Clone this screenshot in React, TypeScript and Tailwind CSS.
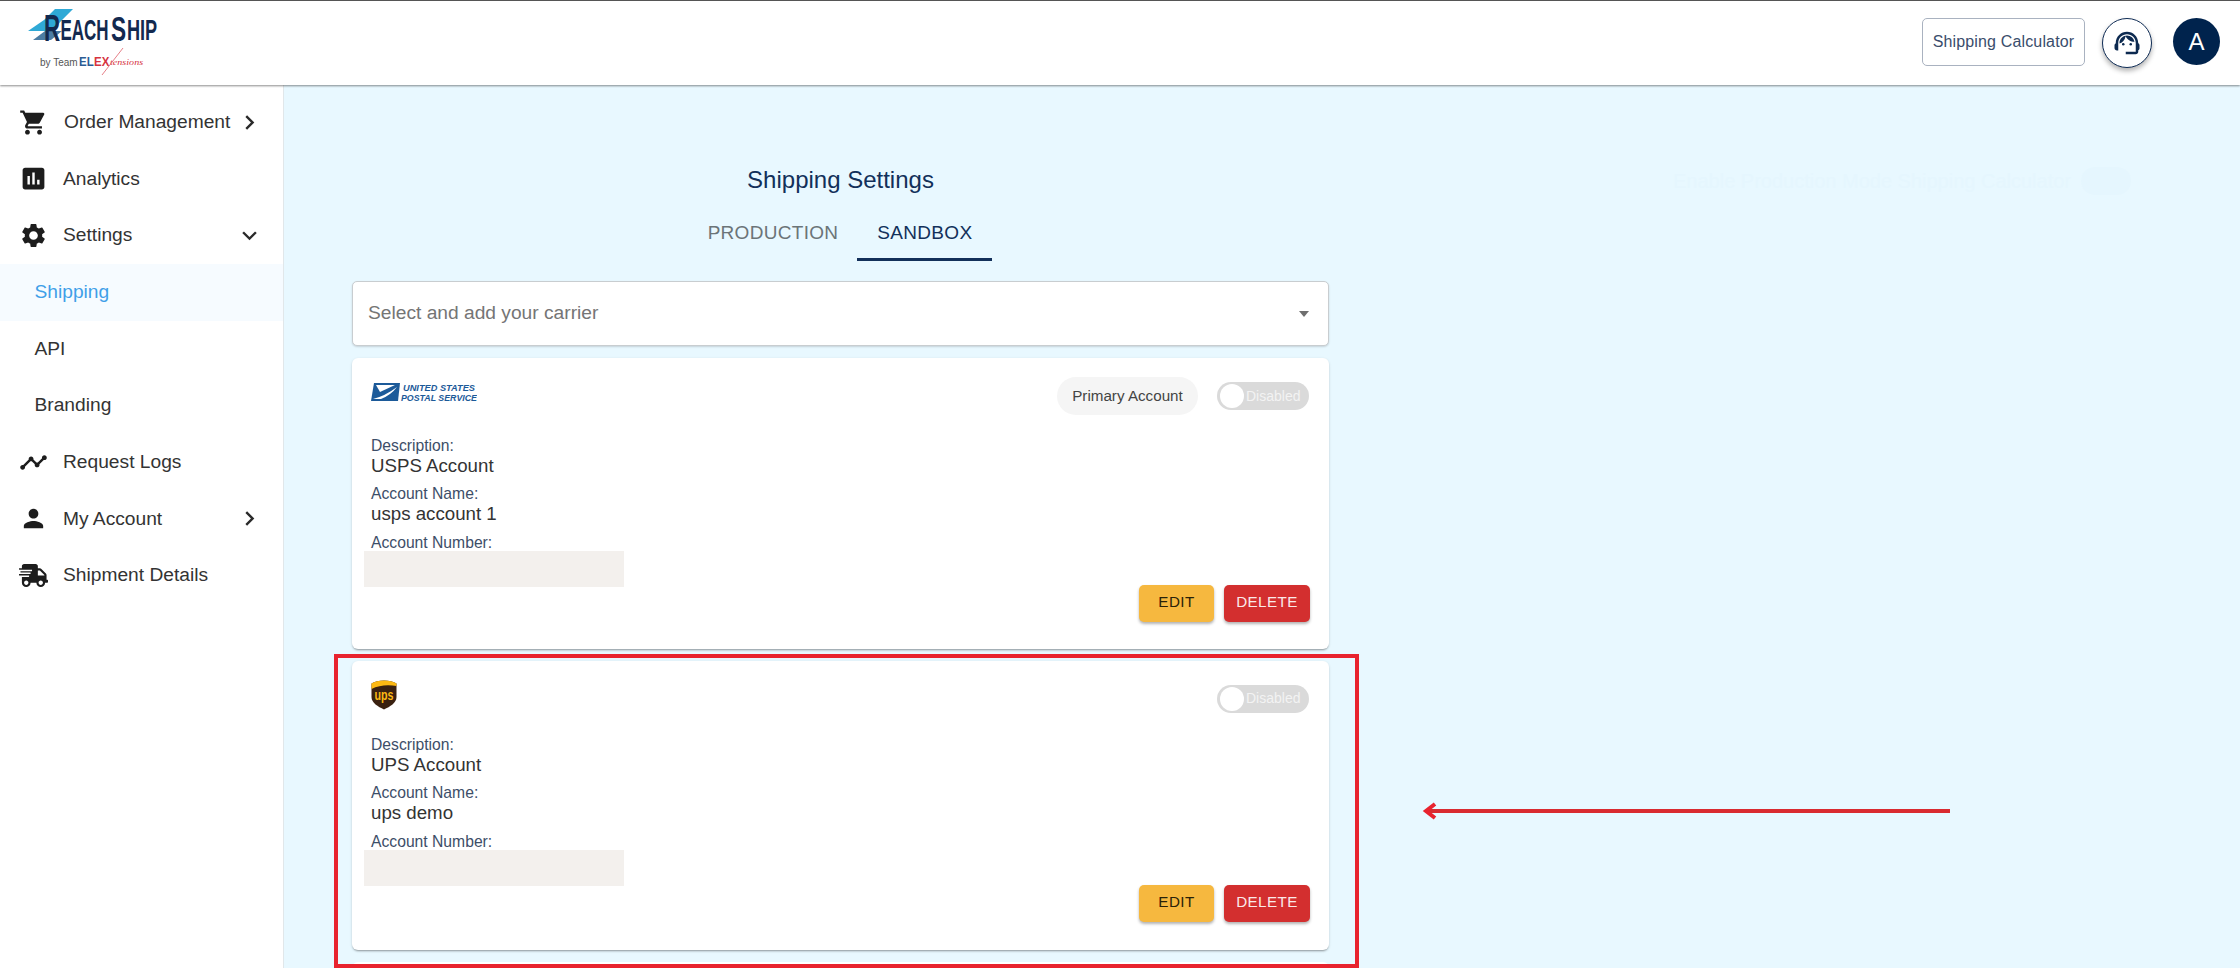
import React from "react";
import { MdShoppingCart, MdAssessment, MdSettings, MdTimeline, MdPerson, MdChevronRight, MdExpandMore, MdSupportAgent } from "react-icons/md";
import { FaShippingFast } from "react-icons/fa";

function ReachShipLogo() {
  const bold = { fontFamily: "'Liberation Sans', sans-serif", fontWeight: 700 };
  return (
    <svg width="150" height="76" viewBox="0 0 150 76" className="shrink-0">
      <polygon points="35,8 53,8 42,19 32,30 8,30 24,19" fill="#2fa9d6" />
      <polygon points="25,30 42,30 31,39 13,39" fill="#4c7ca3" />
      <text transform="translate(24,40) scale(0.62,1)" {...bold} fill="#13294f" fontSize="36">R</text>
      <text transform="translate(40.5,39) scale(0.585,1)" {...bold} fill="#13294f" fontSize="29">EACH</text>
      <text transform="translate(91,40) scale(0.63,1)" {...bold} fill="#13294f" fontSize="36">S</text>
      <text transform="translate(107,39) scale(0.625,1)" {...bold} fill="#13294f" fontSize="29">HIP</text>
      <text x="20" y="65" fontFamily="'Liberation Sans', sans-serif" fontSize="10" fill="#555">by Team</text>
      <text transform="translate(59,65) scale(0.85,1)" {...bold} fontSize="13.5" fill="#2c5c94">EL</text>
      <text transform="translate(74,65) scale(0.85,1)" {...bold} fontSize="13.5" fill="#d6333f">EX</text>
      <text transform="translate(90,64) scale(1.35,1)" fontFamily="'Liberation Serif', serif" fontStyle="italic" fontSize="7.5" fill="#d6333f">tensions</text>
      <line x1="103" y1="47" x2="82" y2="74" stroke="#e0606a" strokeWidth="0.8" />
    </svg>
  );
}

function UspsLogo() {
  return (
    <svg width="106" height="20" viewBox="0 0 106 20" className="mt-[5px]">
      <polygon points="3,1 29,1 27,19 0,19" fill="#1c5a99" />
      <path d="M5 3 L24 3 L9 10 Z" fill="#fff" />
      <path d="M2 17 Q14 14 26 5 Q20 13 10 17 Z" fill="#fff" />
      <text x="32" y="8.5" textLength="72" lengthAdjust="spacingAndGlyphs" fontFamily="'Liberation Sans', sans-serif" fontStyle="italic" fontWeight="700" fontSize="9" fill="#1c5a99">UNITED STATES</text>
      <text x="30" y="19" textLength="76" lengthAdjust="spacingAndGlyphs" fontFamily="'Liberation Sans', sans-serif" fontStyle="italic" fontWeight="700" fontSize="9" fill="#1c5a99">POSTAL SERVICE</text>
    </svg>
  );
}

function UpsLogo() {
  return (
    <svg width="26" height="30" viewBox="0 0 26 30">
      <path d="M13 0.5 C18 0.5 22.5 1.5 25.5 3.5 L25.5 17 C25.5 23 19 26.5 13 29.5 C7 26.5 0.5 23 0.5 17 L0.5 3.5 C3.5 1.5 8 0.5 13 0.5 Z" fill="#3a2110" />
      <path d="M0.5 3.5 C3.5 1.5 8 0.5 13 0.5 C18 0.5 22.5 1.5 25.5 3.5 L25.5 6 C18 4.5 8 4.8 0.5 9 Z" fill="#fdb913" />
      <text transform="translate(13,20) scale(0.82,1.15)" textAnchor="middle" fontFamily="'Liberation Sans', sans-serif" fontWeight="700" fontSize="13" fill="#fdb913">ups</text>
    </svg>
  );
}

function NavRow({ icon, label }: { icon: React.ReactNode; label: string }) {
  return (
    <div className="flex h-[56.67px] items-center pl-[18.5px] text-[19.2px] text-[#333]">
      <span className="flex w-[29px] justify-center text-[#1d1d1d]">{icon}</span>
      <span className="ml-[15.5px]">{label}</span>
    </div>
  );
}

function SubRow({ label, active }: { label: string; active?: boolean }) {
  return (
    <div className={active ? "flex h-[56.67px] items-center bg-[#f6fbff] pl-[34.5px] text-[19.2px] text-[#3f9fe8]" : "flex h-[56.67px] items-center pl-[34.5px] text-[19.2px] text-[#333]"}>
      {label}
    </div>
  );
}

function Toggle() {
  return (
    <div className="flex h-[28px] w-[92px] items-center rounded-full bg-[#dadada] pl-[3px]">
      <span className="h-[24px] w-[24px] rounded-full bg-white" />
      <span className="ml-[2px] text-[14px] text-[#f3f3f3]">Disabled</span>
    </div>
  );
}

function Field({ label, value }: { label: string; value: string }) {
  return (
    <div className="mb-[7.5px]">
      <div className="text-[15.7px] leading-[19px] text-[#3d4e68]">{label}</div>
      <div className="text-[18.7px] leading-[22px] text-[#333]">{value}</div>
    </div>
  );
}

function CarrierCard({ logo, chip, desc, name, tall }: { logo: React.ReactNode; chip?: boolean; desc: string; name: string; tall?: boolean }) {
  return (
    <div className={tall ? "mb-[12px] rounded-[6px] bg-white pb-[27px] pl-[19px] pr-[19px] pt-[19px] shadow-[0_2px_2px_-1px_rgba(0,0,0,0.3),0_1px_3px_0_rgba(0,0,0,0.14)]" : "mb-[12px] rounded-[6px] bg-white pb-[28px] pl-[19px] pr-[19px] pt-[19px] shadow-[0_2px_2px_-1px_rgba(0,0,0,0.3),0_1px_3px_0_rgba(0,0,0,0.14)]"}>
      <div className="flex h-[38px] items-center justify-between">
        <div className="self-start">{logo}</div>
        <div className="mr-[1px] flex items-center gap-[19px]">
          {chip ? <div className="flex h-[38px] w-[141px] items-center justify-center rounded-full bg-[#f5f5f5] text-[15.2px] text-[#444]">Primary Account</div> : null}
          <Toggle />
        </div>
      </div>
      <div className={tall ? "mt-[20.5px]" : "mt-[17px]"}>
        <Field label="Description:" value={desc} />
        <Field label="Account Name:" value={name} />
        <div className="text-[15.7px] leading-[19px] text-[#3d4e68]">Account Number:</div>
        <div className={tall ? "-ml-[7px] -mt-[0.5px] h-[36px] w-[260px] bg-[#f3f0ed]" : "-ml-[7px] -mt-[0.5px] h-[35.5px] w-[260px] bg-[#f3f0ed]"} />
      </div>
      <div className={tall ? "-mt-[2.5px] flex justify-end gap-[10px]" : "-mt-[1px] flex justify-end gap-[10px]"}>
        <button className="flex h-[37px] w-[75px] items-center justify-center rounded-[5px] bg-[#f6b83f] pb-[1px] text-[15.2px] tracking-[0.43px] text-[#2a2208] shadow-[0_2px_3px_rgba(0,0,0,0.3)]">EDIT</button>
        <button className="flex h-[37px] w-[86px] items-center justify-center rounded-[5px] bg-[#d32f2f] pb-[1px] text-[15.2px] tracking-[0.43px] text-[#fbe9e9] shadow-[0_2px_3px_rgba(0,0,0,0.3)]">DELETE</button>
      </div>
    </div>
  );
}

export default function App() {
  return (
    <div className="relative h-[977px] w-[2240px] overflow-hidden bg-white font-['Liberation_Sans',Arial,sans-serif]">
      <div className="flex h-[968px] flex-col overflow-hidden border-t border-t-[#555]">
        <header className="relative z-10 flex h-[84px] shrink-0 items-start justify-between bg-white pr-[20px] shadow-[0_1px_2px_rgba(0,0,0,0.45)]">
          <div className="ml-[20px]"><ReachShipLogo /></div>
          <div className="flex items-start pt-[17px]">
            <button className="flex h-[48px] w-[163px] items-center justify-center rounded-[5px] border-[1.5px] border-[#a9b2c0] bg-white text-[16px] tracking-[0.15px] text-[#3a4d6c]">Shipping Calculator</button>
            <button className="ml-[17px] flex h-[50px] w-[50px] items-center justify-center rounded-full border-[1.5px] border-[#0f2c55] bg-white text-[#0d2a50] shadow-[0_3px_5px_rgba(0,0,0,0.3)]"><MdSupportAgent size={30} /></button>
            <div className="ml-[21px] flex h-[47px] w-[47px] items-center justify-center rounded-full bg-[#00234d] text-[24px] text-white">A</div>
          </div>
        </header>
        <div className="flex min-h-0 flex-1">
          <aside className="w-[284px] shrink-0 border-r border-r-[#e1e7ea] bg-white pt-[9px]">
            <div className="flex h-[56.67px] items-center pl-[18.5px] text-[19.2px] text-[#333]">
              <span className="flex w-[29px] justify-center text-[#1d1d1d]"><MdShoppingCart size={29} /></span>
              <span className="ml-[16.5px]">Order Management</span>
              <span className="ml-[5px] flex text-[#2a2a2a]"><MdChevronRight size={29} /></span>
            </div>
            <NavRow icon={<MdAssessment size={29} />} label="Analytics" />
            <div className="flex h-[56.67px] items-center justify-between pl-[18.5px] pr-[19px] text-[19.2px] text-[#333]">
              <span className="flex items-center"><span className="flex w-[29px] justify-center text-[#1d1d1d]"><MdSettings size={29} /></span><span className="ml-[15.5px]">Settings</span></span>
              <span className="flex text-[#2a2a2a]"><MdExpandMore size={29} /></span>
            </div>
            <SubRow label="Shipping" active />
            <SubRow label="API" />
            <SubRow label="Branding" />
            <NavRow icon={<MdTimeline size={29} />} label="Request Logs" />
            <div className="flex h-[56.67px] items-center justify-between pl-[18.5px] pr-[19px] text-[19.2px] text-[#333]">
              <span className="flex items-center"><span className="flex w-[29px] justify-center text-[#1d1d1d]"><MdPerson size={29} /></span><span className="ml-[15.5px]">My Account</span></span>
              <span className="flex text-[#2a2a2a]"><MdChevronRight size={29} /></span>
            </div>
            <NavRow icon={<FaShippingFast size={29} />} label="Shipment Details" />
          </aside>
          <main className="flex min-w-0 flex-1 overflow-hidden bg-[#e8f8ff] pl-[68px] pt-[78px]">
            <div className="w-[977px] shrink-0">
              <h1 className="h-[34px] text-center text-[24px] font-normal leading-[34px] text-[#12305a]">Shipping Settings</h1>
              <div className="mt-[6px] flex justify-center text-[19px] tracking-[0.3px]">
                <div className="flex h-[58px] items-center border-b-[3px] border-b-transparent px-[19px] pt-[5px] text-[#6b7478]">PRODUCTION</div>
                <div className="flex h-[58px] items-center border-b-[3px] border-b-[#12305a] px-[20px] pt-[5px] text-[#12305a]">SANDBOX</div>
              </div>
              <div className="mb-[12px] mt-[20px] flex h-[65px] items-center justify-between rounded-[5px] border border-[#c8cdd0] bg-white pl-[15px] pr-[18px] text-[19.2px] text-[#757575] shadow-[0_1px_2px_rgba(0,0,0,0.15)]">
                <span>Select and add your carrier</span>
                <svg width="12" height="8" viewBox="0 0 12 8"><polygon points="1,1 11,1 6,7" fill="#6f6f6f" /></svg>
              </div>
              <CarrierCard tall logo={<UspsLogo />} chip desc="USPS Account" name="usps account 1" />
              <CarrierCard logo={<UpsLogo />} desc="UPS Account" name="ups demo" />
              <div className="h-[60px] rounded-[6px] bg-white" />
            </div>
            <div className="ml-[344px] mt-[4px] flex h-[28px] items-center whitespace-nowrap text-[20px] text-[#e5f6fe]">
              <span>Enable Production Mode Shipping Calculator</span>
              <span className="ml-[10px] h-[28px] w-[50px] rounded-full bg-[#e5f6fe]" />
            </div>
          </main>
        </div>
      </div>
      <div className="absolute left-[334px] top-[654px] h-[314px] w-[1025px] border-4 border-[#e8232e]" />
      <svg className="absolute left-[1420px] top-[800px]" width="534" height="22" viewBox="0 0 534 22">
        <line x1="6" y1="11" x2="530" y2="11" stroke="#d92b30" strokeWidth="4" />
        <polyline points="15,4 6,11 15,18" fill="none" stroke="#e8232e" strokeWidth="4" />
      </svg>
    </div>
  );
}
